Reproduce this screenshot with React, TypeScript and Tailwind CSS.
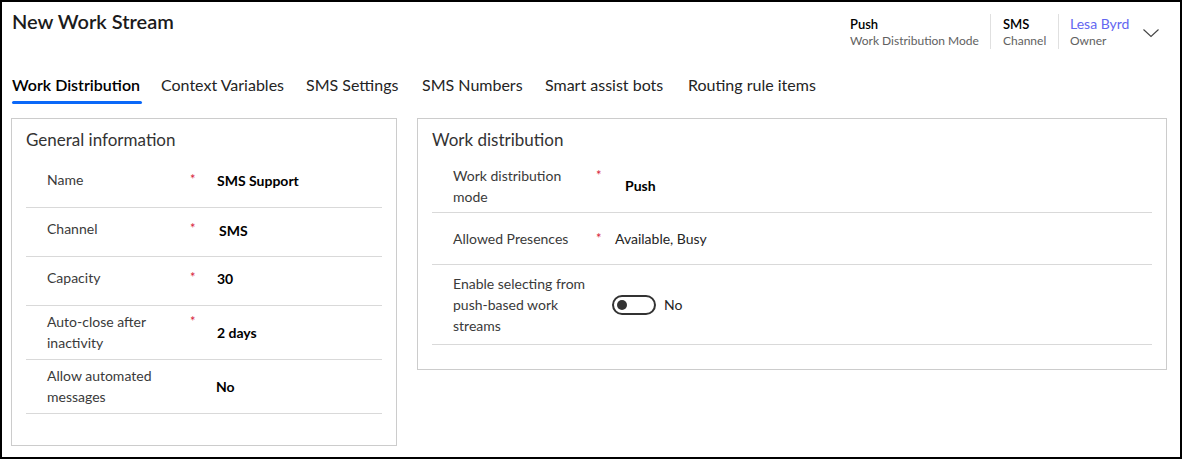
import React from 'react';

type Field = {
  label: string[];
  value?: string;
  required?: boolean;
  offset?: string;
  height: string;
};

const generalFields: Field[] = [
  { label: ['Name'], value: 'SMS Support', required: true, offset: 'mb-[5px]', height: 'h-[49px]' },
  { label: ['Channel'], value: 'SMS', required: true, offset: 'ml-[2px] mb-[4px]', height: 'h-[49px]' },
  { label: ['Capacity'], value: '30', required: true, offset: 'mb-[5px]', height: 'h-[49px]' },
  { label: ['Auto-close after', 'inactivity'], value: '2 days', required: true, height: 'h-[54px]' },
  { label: ['Allow automated', 'messages'], value: 'No', offset: '-ml-[1px] mb-[1px]', height: 'h-[54px]' },
];

const tabs = [
  { name: 'Work Distribution', width: 'w-[149px]', active: true },
  { name: 'Context Variables', width: 'w-[145px]' },
  { name: 'SMS Settings', width: 'w-[116px]' },
  { name: 'SMS Numbers', width: 'w-[123px]' },
  { name: 'Smart assist bots', width: 'w-[143px]' },
  { name: 'Routing rule items', width: 'w-[160px]' },
];

function Asterisk({ width }: { width: string }) {
  return <span className={`${width} shrink-0 text-[13px] leading-[21px] text-[#d6213a]`}>*</span>;
}

function LeftRow({ field }: { field: Field }) {
  return (
    <div className={`flex items-start ${field.height} border-b border-[#d9d9d9] py-[5px] pl-[21px]`}>
      <div className="flex min-h-[31px] items-center">
        <div className="flex items-start">
          <div className="w-[143px] whitespace-nowrap text-[14px] leading-[21px] text-[#3a3a3a]">
            {field.label.map((l) => (
              <div key={l}>{l}</div>
            ))}
          </div>
          {field.required ? <Asterisk width="w-[27px]" /> : <span className="w-[27px]" />}
        </div>
      </div>
      <div className={`self-center text-[14px] font-bold text-black ${field.offset ?? ''}`}>{field.value}</div>
    </div>
  );
}

function Toggle() {
  return (
    <div className="flex items-center gap-[8px]">
      <div className="flex h-[20px] w-[44px] items-center rounded-full border-2 border-[#333] pl-[3px]">
        <div className="h-[10px] w-[10px] rounded-full bg-[#333]" />
      </div>
      <span className="text-[14px] text-[#242424]">No</span>
    </div>
  );
}

export default function App() {
  return (
    <div className="flex h-[459px] w-[1182px] flex-col border-2 border-black bg-white font-['Lato',sans-serif] text-[#242424]">
      {/* Header */}
      <header className="flex h-[71px] items-start pl-[10px]">
        <h1 className="mt-[5px] text-[20px] font-semibold leading-[28px] text-[#1b1b1b]">New Work Stream</h1>
        <div className="ml-auto mr-[21px] mt-[12px] flex items-stretch">
          <div className="w-[140px] pt-[1px]">
            <div className="text-[13px] font-semibold leading-[18px] text-black">Push</div>
            <div className="text-[12px] leading-[16px] text-[#616161]">Work Distribution Mode</div>
          </div>
          <div className="w-[68px] border-l border-[#e0e0e0] pl-[12px] pt-[1px]">
            <div className="text-[13px] font-semibold leading-[18px] text-black">SMS</div>
            <div className="text-[12px] leading-[16px] text-[#616161]">Channel</div>
          </div>
          <div className="flex border-l border-[#e0e0e0] pl-[11px]">
            <div className="w-[73px] pt-[1px]">
              <div className="text-[14px] leading-[18px] text-[#6366f1]">Lesa Byrd</div>
              <div className="text-[12px] leading-[16px] text-[#616161]">Owner</div>
            </div>
            <svg width="16" height="34" viewBox="0 0 16 34" className="shrink-0">
              <path d="M0.5 15.5 L8 22.5 L15.5 15.5" fill="none" stroke="#444" strokeWidth="1.1" />
            </svg>
          </div>
        </div>
      </header>

      {/* Tabs */}
      <nav className="flex h-[45px] items-start pl-[10px]">
        {tabs.map((tab) => (
          <div key={tab.name} className={`${tab.width} shrink-0`}>
            <span className="inline-flex flex-col">
              <span
                className={`text-[16px] leading-[22px] ${tab.active ? 'font-semibold text-black' : 'text-[#242424]'}`}
              >
                {tab.name}
              </span>
              {tab.active && <span className="-mr-[2px] mt-[5px] h-[3px] rounded-full bg-[#0b68f8]" />}
            </span>
          </div>
        ))}
      </nav>

      {/* Sections */}
      <div className="flex items-start gap-[20px] pl-[9px]">
        <section className="h-[328px] w-[386px] shrink-0 border border-[#cccccc] px-[14px]">
          <h2 className="flex h-[40px] items-center pt-[1px] text-[17px] text-[#333]">General information</h2>
          {generalFields.map((f) => (
            <LeftRow key={f.label[0]} field={f} />
          ))}
        </section>

        <section className="h-[252px] w-[750px] shrink-0 border border-[#cccccc] px-[14px]">
          <h2 className="flex h-[40px] items-center pt-[1px] text-[17px] text-[#333]">Work distribution</h2>

          <div className="flex h-[54px] items-center border-b border-[#d9d9d9] pl-[21px]">
            <div className="flex items-start">
              <div className="w-[143px] whitespace-nowrap text-[14px] leading-[21px] text-[#3a3a3a]">
                <div>Work distribution</div>
                <div>mode</div>
              </div>
              <Asterisk width="w-[19px]" />
            </div>
            <div className="ml-[10px] text-[14px] font-bold text-black">Push</div>
          </div>

          <div className="flex h-[52px] items-center border-b border-[#d9d9d9] pl-[21px]">
            <div className="flex items-start">
              <div className="w-[143px] whitespace-nowrap text-[14px] leading-[21px] text-[#3a3a3a]">Allowed Presences</div>
              <Asterisk width="w-[19px]" />
            </div>
            <div className="text-[14px] text-[#242424]">Available, Busy</div>
          </div>

          <div className="flex h-[80px] items-center border-b border-[#d9d9d9] pl-[21px]">
            <div className="w-[145px] whitespace-nowrap text-[14px] leading-[21px] text-[#3a3a3a]">
              <div>Enable selecting from</div>
              <div>push-based work</div>
              <div>streams</div>
            </div>
            <div className="ml-[14px]">
              <Toggle />
            </div>
          </div>
        </section>
      </div>
    </div>
  );
}
